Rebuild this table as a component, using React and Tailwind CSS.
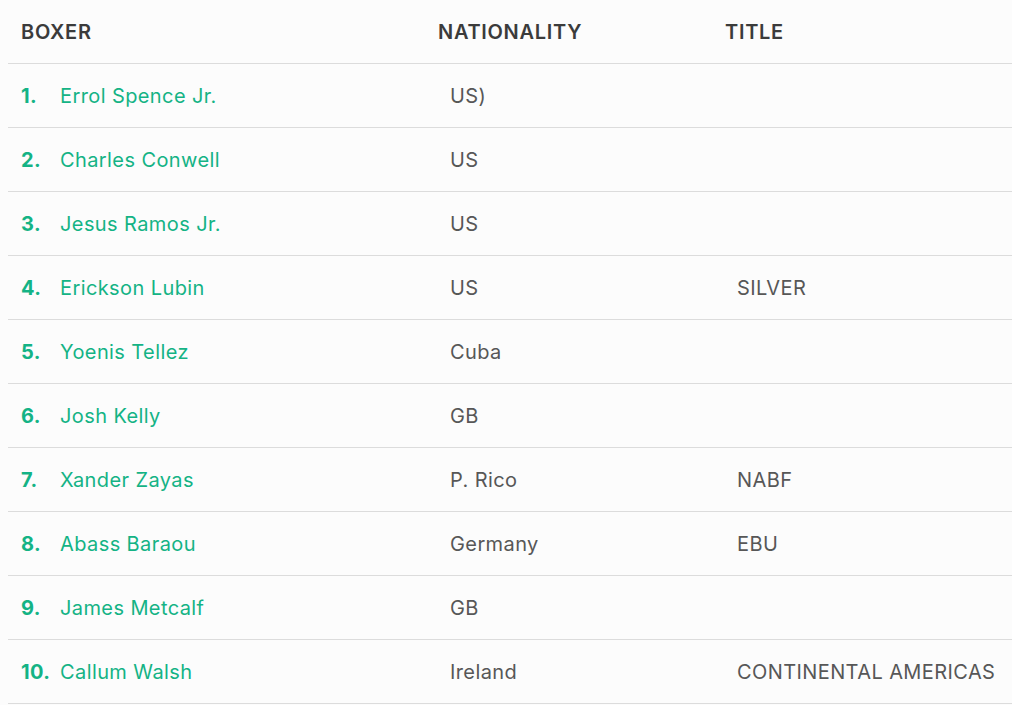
const BOXERS = [
  { name: "Errol Spence Jr.", nation: "US)", title: "" },
  { name: "Charles Conwell", nation: "US", title: "" },
  { name: "Jesus Ramos Jr.", nation: "US", title: "" },
  { name: "Erickson Lubin", nation: "US", title: "SILVER" },
  { name: "Yoenis Tellez", nation: "Cuba", title: "" },
  { name: "Josh Kelly", nation: "GB", title: "" },
  { name: "Xander Zayas", nation: "P. Rico", title: "NABF" },
  { name: "Abass Baraou", nation: "Germany", title: "EBU" },
  { name: "James Metcalf", nation: "GB", title: "" },
  { name: "Callum Walsh", nation: "Ireland", title: "CONTINENTAL AMERICAS" },
];

export default function App() {
  return (
    <div
      className="min-h-screen bg-[#fcfcfc] pl-2 overflow-hidden"
      style={{ fontFamily: "Inter, 'Noto Sans', sans-serif" }}
    >
      {/* header */}
      <div className="grid grid-cols-[417px_287px_1fr] h-[64px] items-center border-b border-[#dcdcdc] text-[20px] font-semibold text-[#3b3b3b] tracking-[0.7px]">
        <div className="pl-[13px]">BOXER</div>
        <div className="pl-[13px]">NATIONALITY</div>
        <div className="pl-[13px]">TITLE</div>
      </div>

      {BOXERS.map((b, i) => (
        <div
          key={b.name}
          className="grid grid-cols-[417px_287px_1fr] h-[64px] items-center border-b border-[#dcdcdc] text-[20px] tracking-[0.4px] whitespace-nowrap"
        >
          <div className="pl-[13px] flex items-center">
            <span className="w-[39px] font-bold text-[#14b385]">{i + 1}.</span>
            <span className="text-[#14b385]">{b.name}</span>
          </div>
          <div className="pl-[25px] text-[#575757]">{b.nation}</div>
          <div className="pl-[25px] text-[#575757]">{b.title}</div>
        </div>
      ))}
    </div>
  );
}
